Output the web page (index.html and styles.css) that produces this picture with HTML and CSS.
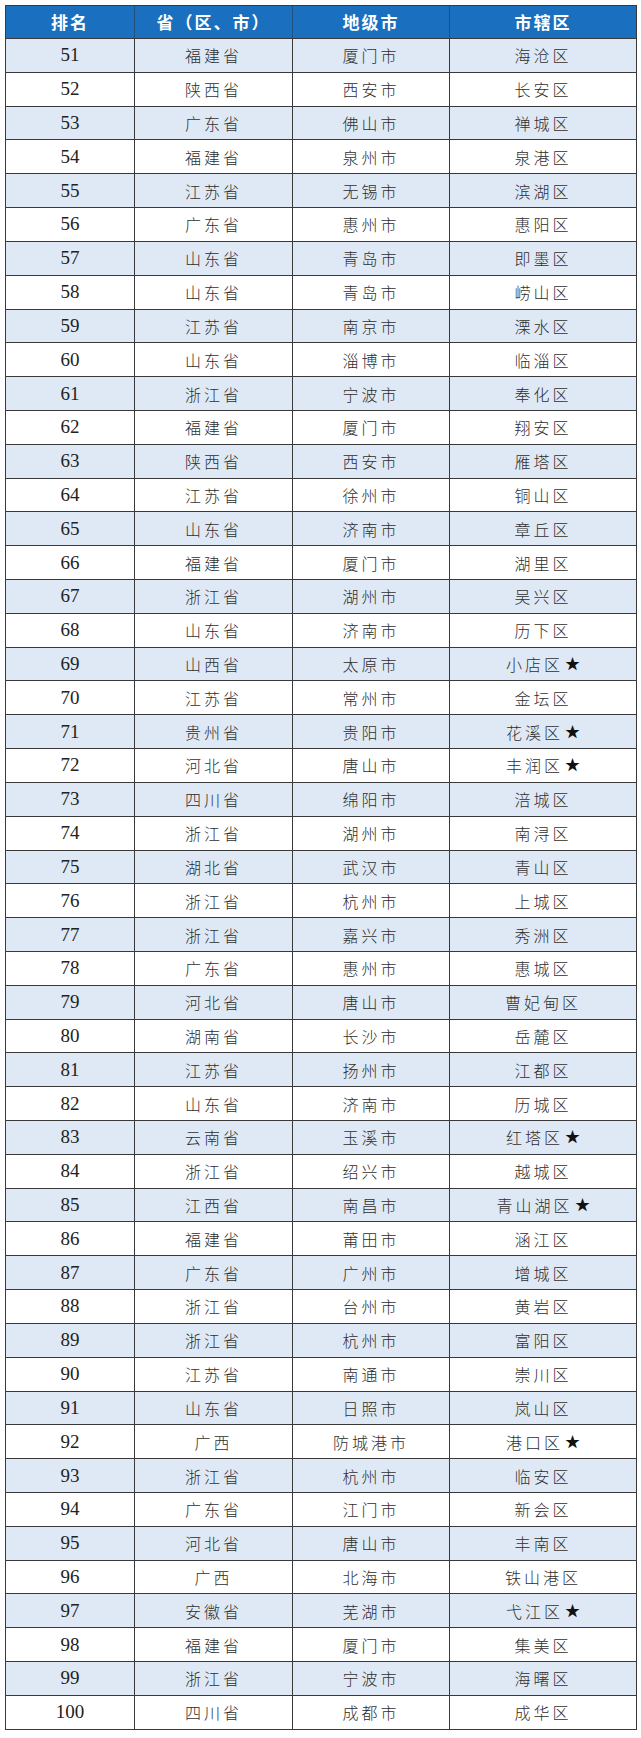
FILE: index.html
```html
<!DOCTYPE html>
<html lang="zh-CN">
<head>
<meta charset="utf-8">
<title>排名</title>
<link rel="stylesheet" href="styles.css">
</head>
<body>
<div class="page">
<div class="rank" role="table">
<div class="row head" role="row"><div class="cell">排名</div><div class="cell">省（区、市）</div><div class="cell">地级市</div><div class="cell">市辖区</div></div>
<div class="row" role="row"><div class="cell n">51</div><div class="cell">福建省</div><div class="cell">厦门市</div><div class="cell">海沧区</div></div>
<div class="row" role="row"><div class="cell n">52</div><div class="cell">陕西省</div><div class="cell">西安市</div><div class="cell">长安区</div></div>
<div class="row" role="row"><div class="cell n">53</div><div class="cell">广东省</div><div class="cell">佛山市</div><div class="cell">禅城区</div></div>
<div class="row" role="row"><div class="cell n">54</div><div class="cell">福建省</div><div class="cell">泉州市</div><div class="cell">泉港区</div></div>
<div class="row" role="row"><div class="cell n">55</div><div class="cell">江苏省</div><div class="cell">无锡市</div><div class="cell">滨湖区</div></div>
<div class="row" role="row"><div class="cell n">56</div><div class="cell">广东省</div><div class="cell">惠州市</div><div class="cell">惠阳区</div></div>
<div class="row" role="row"><div class="cell n">57</div><div class="cell">山东省</div><div class="cell">青岛市</div><div class="cell">即墨区</div></div>
<div class="row" role="row"><div class="cell n">58</div><div class="cell">山东省</div><div class="cell">青岛市</div><div class="cell">崂山区</div></div>
<div class="row" role="row"><div class="cell n">59</div><div class="cell">江苏省</div><div class="cell">南京市</div><div class="cell">溧水区</div></div>
<div class="row" role="row"><div class="cell n">60</div><div class="cell">山东省</div><div class="cell">淄博市</div><div class="cell">临淄区</div></div>
<div class="row" role="row"><div class="cell n">61</div><div class="cell">浙江省</div><div class="cell">宁波市</div><div class="cell">奉化区</div></div>
<div class="row" role="row"><div class="cell n">62</div><div class="cell">福建省</div><div class="cell">厦门市</div><div class="cell">翔安区</div></div>
<div class="row" role="row"><div class="cell n">63</div><div class="cell">陕西省</div><div class="cell">西安市</div><div class="cell">雁塔区</div></div>
<div class="row" role="row"><div class="cell n">64</div><div class="cell">江苏省</div><div class="cell">徐州市</div><div class="cell">铜山区</div></div>
<div class="row" role="row"><div class="cell n">65</div><div class="cell">山东省</div><div class="cell">济南市</div><div class="cell">章丘区</div></div>
<div class="row" role="row"><div class="cell n">66</div><div class="cell">福建省</div><div class="cell">厦门市</div><div class="cell">湖里区</div></div>
<div class="row" role="row"><div class="cell n">67</div><div class="cell">浙江省</div><div class="cell">湖州市</div><div class="cell">吴兴区</div></div>
<div class="row" role="row"><div class="cell n">68</div><div class="cell">山东省</div><div class="cell">济南市</div><div class="cell">历下区</div></div>
<div class="row" role="row"><div class="cell n">69</div><div class="cell">山西省</div><div class="cell">太原市</div><div class="cell">小店区<span class="star">★</span></div></div>
<div class="row" role="row"><div class="cell n">70</div><div class="cell">江苏省</div><div class="cell">常州市</div><div class="cell">金坛区</div></div>
<div class="row" role="row"><div class="cell n">71</div><div class="cell">贵州省</div><div class="cell">贵阳市</div><div class="cell">花溪区<span class="star">★</span></div></div>
<div class="row" role="row"><div class="cell n">72</div><div class="cell">河北省</div><div class="cell">唐山市</div><div class="cell">丰润区<span class="star">★</span></div></div>
<div class="row" role="row"><div class="cell n">73</div><div class="cell">四川省</div><div class="cell">绵阳市</div><div class="cell">涪城区</div></div>
<div class="row" role="row"><div class="cell n">74</div><div class="cell">浙江省</div><div class="cell">湖州市</div><div class="cell">南浔区</div></div>
<div class="row" role="row"><div class="cell n">75</div><div class="cell">湖北省</div><div class="cell">武汉市</div><div class="cell">青山区</div></div>
<div class="row" role="row"><div class="cell n">76</div><div class="cell">浙江省</div><div class="cell">杭州市</div><div class="cell">上城区</div></div>
<div class="row" role="row"><div class="cell n">77</div><div class="cell">浙江省</div><div class="cell">嘉兴市</div><div class="cell">秀洲区</div></div>
<div class="row" role="row"><div class="cell n">78</div><div class="cell">广东省</div><div class="cell">惠州市</div><div class="cell">惠城区</div></div>
<div class="row" role="row"><div class="cell n">79</div><div class="cell">河北省</div><div class="cell">唐山市</div><div class="cell">曹妃甸区</div></div>
<div class="row" role="row"><div class="cell n">80</div><div class="cell">湖南省</div><div class="cell">长沙市</div><div class="cell">岳麓区</div></div>
<div class="row" role="row"><div class="cell n">81</div><div class="cell">江苏省</div><div class="cell">扬州市</div><div class="cell">江都区</div></div>
<div class="row" role="row"><div class="cell n">82</div><div class="cell">山东省</div><div class="cell">济南市</div><div class="cell">历城区</div></div>
<div class="row" role="row"><div class="cell n">83</div><div class="cell">云南省</div><div class="cell">玉溪市</div><div class="cell">红塔区<span class="star">★</span></div></div>
<div class="row" role="row"><div class="cell n">84</div><div class="cell">浙江省</div><div class="cell">绍兴市</div><div class="cell">越城区</div></div>
<div class="row" role="row"><div class="cell n">85</div><div class="cell">江西省</div><div class="cell">南昌市</div><div class="cell">青山湖区<span class="star">★</span></div></div>
<div class="row" role="row"><div class="cell n">86</div><div class="cell">福建省</div><div class="cell">莆田市</div><div class="cell">涵江区</div></div>
<div class="row" role="row"><div class="cell n">87</div><div class="cell">广东省</div><div class="cell">广州市</div><div class="cell">增城区</div></div>
<div class="row" role="row"><div class="cell n">88</div><div class="cell">浙江省</div><div class="cell">台州市</div><div class="cell">黄岩区</div></div>
<div class="row" role="row"><div class="cell n">89</div><div class="cell">浙江省</div><div class="cell">杭州市</div><div class="cell">富阳区</div></div>
<div class="row" role="row"><div class="cell n">90</div><div class="cell">江苏省</div><div class="cell">南通市</div><div class="cell">崇川区</div></div>
<div class="row" role="row"><div class="cell n">91</div><div class="cell">山东省</div><div class="cell">日照市</div><div class="cell">岚山区</div></div>
<div class="row" role="row"><div class="cell n">92</div><div class="cell">广西</div><div class="cell">防城港市</div><div class="cell">港口区<span class="star">★</span></div></div>
<div class="row" role="row"><div class="cell n">93</div><div class="cell">浙江省</div><div class="cell">杭州市</div><div class="cell">临安区</div></div>
<div class="row" role="row"><div class="cell n">94</div><div class="cell">广东省</div><div class="cell">江门市</div><div class="cell">新会区</div></div>
<div class="row" role="row"><div class="cell n">95</div><div class="cell">河北省</div><div class="cell">唐山市</div><div class="cell">丰南区</div></div>
<div class="row" role="row"><div class="cell n">96</div><div class="cell">广西</div><div class="cell">北海市</div><div class="cell">铁山港区</div></div>
<div class="row" role="row"><div class="cell n">97</div><div class="cell">安徽省</div><div class="cell">芜湖市</div><div class="cell">弋江区<span class="star">★</span></div></div>
<div class="row" role="row"><div class="cell n">98</div><div class="cell">福建省</div><div class="cell">厦门市</div><div class="cell">集美区</div></div>
<div class="row" role="row"><div class="cell n">99</div><div class="cell">浙江省</div><div class="cell">宁波市</div><div class="cell">海曙区</div></div>
<div class="row" role="row"><div class="cell n">100</div><div class="cell">四川省</div><div class="cell">成都市</div><div class="cell">成华区</div></div>
</div>
</div>
</body>
</html>
```

FILE: styles.css
```css
html, body {
  margin: 0;
  padding: 0;
  background: #ffffff;
}

.page {
  padding: 5px 0 0 5px;
}

.rank {
  width: 632px;
  box-sizing: border-box;
  border: 1px solid #3a3a3a;
  color: #2e2e2e;
  font-family: "Noto Sans CJK SC", sans-serif;
}

.row {
  display: grid;
  grid-template-columns: 129px 158px 157px 186px;
  height: 33.82px;
  box-sizing: border-box;
  border-bottom: 1px solid #3a3a3a;
}

.row:last-child {
  border-bottom: none;
  height: 32.82px;
}

.row:nth-child(even) {
  background: #dfe9f5;
}

.cell {
  display: flex;
  align-items: center;
  justify-content: center;
  border-right: 1px solid #3a3a3a;
  font-weight: 300;
  font-size: 16px;
  letter-spacing: 3px;
  line-height: 20px;
  white-space: nowrap;
}

.cell:last-child {
  border-right: none;
}

.cell.n {
  font-family: "Liberation Serif", serif;
  font-weight: 400;
  font-size: 19px;
  letter-spacing: 0;
  color: #222;
}

.row.head {
  height: 33px;
  background: #1a6fbe;
}

.row.head .cell {
  color: #ffffff;
  font-weight: 700;
  font-size: 17px;
  letter-spacing: 2px;
  border-right-color: #20507e;
}

.row.head .cell:last-child {
  border-right: none;
}

.star {
  margin-left: 2px;
  color: #111;
  font-family: "DejaVu Sans", sans-serif;
  font-size: 15px;
  letter-spacing: 0;
}
```
